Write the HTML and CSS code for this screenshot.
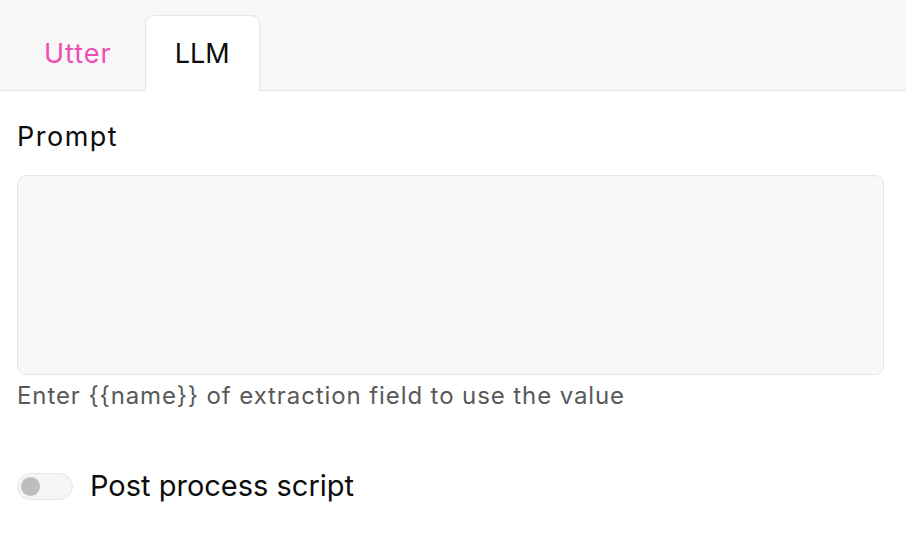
FILE: index.html
```html
<!DOCTYPE html>
<html lang="en">
<head>
<meta charset="utf-8">
<title>LLM</title>
<link rel="stylesheet" href="styles.css">
</head>
<body>
<div class="tabs">
  <div class="tab">Utter</div>
  <div class="tab tab-active">LLM</div>
</div>
<div class="content">
  <label class="field-label" for="prompt">Prompt</label>
  <textarea id="prompt" class="prompt-input"></textarea>
  <div class="help">Enter {{name}} of extraction field to use the value</div>
  <div class="switch-row">
    <span class="switch"><span class="knob"></span></span>
    <span class="switch-label">Post process script</span>
  </div>
</div>
</body>
</html>
```
FILE: styles.css
```css
* { box-sizing: border-box; }
body {
  margin: 0;
  background: #fff;
  font-family: "Inter", "Open Sans", sans-serif;
  color: #111;
}
.tabs {
  display: flex;
  align-items: flex-end;
  height: 91px;
  padding-left: 11px;
  background: #f7f7f7;
  border-bottom: 1px solid #e6e6e6;
}
.tab {
  display: flex;
  align-items: center;
  justify-content: center;
  height: 76px;
  padding: 0 32px;
  margin-bottom: -1px;
  font-size: 27px;
  letter-spacing: 1px;
  color: #ef4db6;
  border: 1px solid transparent;
  border-bottom: none;
  border-radius: 9px 9px 0 0;
}
.tab-active {
  width: 115px;
  padding: 0;
  letter-spacing: 0;
  color: #0d0d0d;
  background: #fff;
  border-color: #e6e6e6;
}
.content {
  display: flex;
  flex-direction: column;
  align-items: flex-start;
  padding: 0 22px 0 17px;
}
.field-label {
  margin-top: 28px;
  font-size: 27px;
  line-height: 36px;
  letter-spacing: 1.5px;
  color: #0d0d0d;
}
.prompt-input {
  display: block;
  width: 100%;
  height: 200px;
  margin-top: 20px;
  background: #f8f8f8;
  border: 1px solid #e6e6e6;
  border-radius: 9px;
  resize: none;
  outline: none;
  font: inherit;
}
.help {
  margin-top: 5px;
  font-size: 24px;
  line-height: 32px;
  letter-spacing: 0.9px;
  color: #595959;
}
.switch-row {
  display: flex;
  align-items: center;
  gap: 17px;
  margin-top: 56px;
}
.switch {
  display: flex;
  align-items: center;
  width: 56px;
  height: 27px;
  padding-left: 3px;
  background: #f5f5f5;
  border: 1px solid #e6e6e6;
  border-radius: 14px;
}
.knob {
  width: 19px;
  height: 19px;
  border-radius: 50%;
  background: #bdbdbd;
}
.switch-label {
  font-size: 29px;
  line-height: 36px;
  color: #0d0d0d;
}
```
